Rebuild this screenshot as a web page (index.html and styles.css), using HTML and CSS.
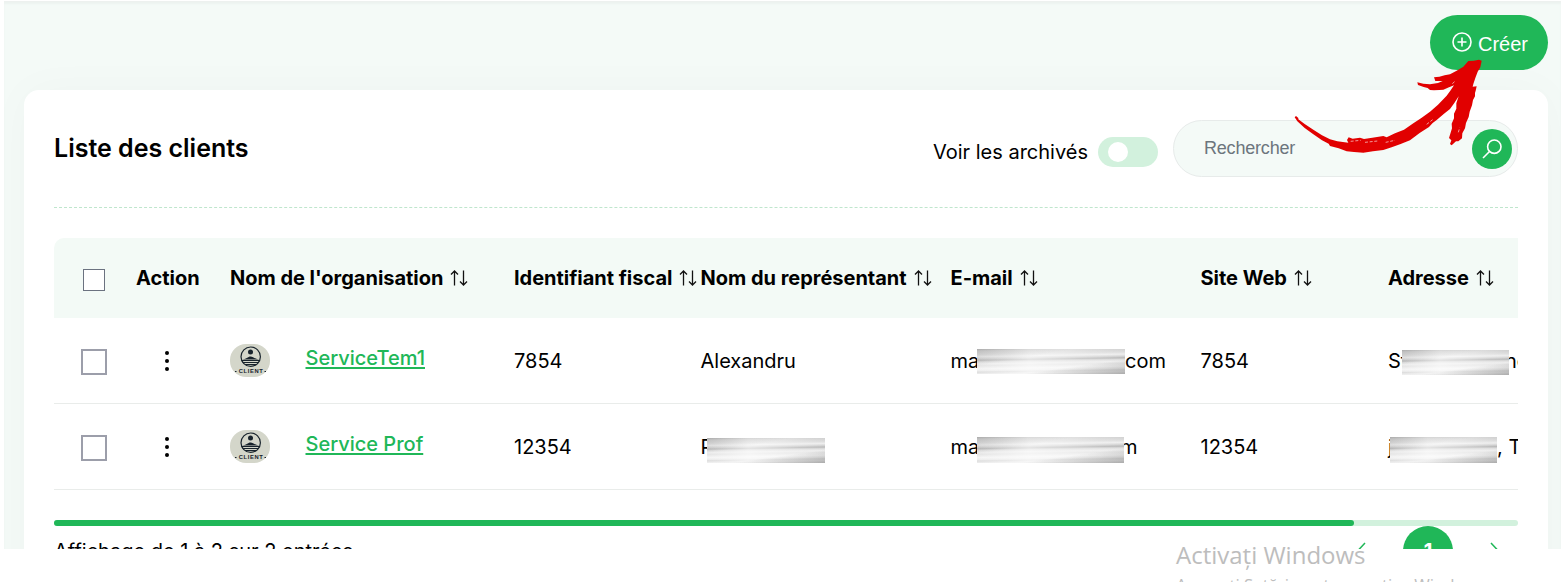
FILE: index.html
```html
<!DOCTYPE html>
<html lang="fr">
<head>
<meta charset="utf-8">
<title>Liste des clients</title>
<link rel="stylesheet" href="styles.css">
</head>
<body>
<svg class="defs" width="0" height="0" aria-hidden="true">
  <symbol id="sort" viewBox="0 0 20 18"><path d="M5.500 16.500V2M2 5.500l3.500-3.500 3.500 3.500M14.500 1.500v14.500M11 12.500l3.500 3.500 3.500-3.500" fill="none" stroke="#111" stroke-width="1.300"/></symbol>
  <symbol id="logo" viewBox="0 0 40 33">
    <rect width="40" height="33" rx="16" fill="#d4d6ca"/>
    <circle cx="20.700" cy="12.700" r="9.700" fill="none" stroke="#18232c" stroke-width="1.200"/>
    <circle cx="20.500" cy="8" r="2.500" fill="#18232c"/>
    <path d="M12 15.500c4-.2 6-3 8.500-3s4.500 2.800 9 3z" fill="#18232c"/>
    <path d="M11.500 16.500h18.500M12.500 18.500h16.500M15 20.500h11.500" stroke="#18232c" stroke-width="1"/>
    <text x="20.800" y="29.300" text-anchor="middle" textLength="24" class="logo-text">CLIENT</text>
    <path d="M5 27.500h1.500M34.500 27.500h1.500" stroke="#18232c"/>
  </symbol>
</svg>
<div class="app">
  <div class="toolbar">
    <button class="create"><svg width="20" height="20" viewBox="0 0 20 20" fill="none" stroke="#fff" stroke-width="1.600"><circle cx="10" cy="10" r="9"/><path d="M10 5.500v9M5.500 10h9"/></svg>Créer</button>
  </div>
  <main class="card">
    <header class="head">
      <h1>Liste des clients</h1>
      <div class="filters">
        <span class="archived">Voir les archivés</span>
        <span class="toggle"></span>
        <div class="search"><span>Rechercher</span><span class="search-btn"><svg width="20" height="20" viewBox="0 0 20 20" fill="none" stroke="#fff" stroke-width="1.600"><circle cx="12.300" cy="7.700" r="6.700"/><path d="M7.500 12.500L1 19"/></svg></span></div>
      </div>
    </header>
    <div class="table">
      <div class="row thead">
        <span class="pick"><i class="box small"></i></span><span>Action</span>
        <span>Nom de l'organisation<svg class="sort"><use href="#sort"/></svg></span>
        <span>Identifiant fiscal<svg class="sort"><use href="#sort"/></svg></span>
        <span>Nom du représentant<svg class="sort"><use href="#sort"/></svg></span>
        <span>E-mail<svg class="sort"><use href="#sort"/></svg></span>
        <span>Site Web<svg class="sort"><use href="#sort"/></svg></span>
        <span>Adresse<svg class="sort"><use href="#sort"/></svg></span>
      </div>
      <div class="row">
        <span class="pick"><i class="box"></i></span>
        <span class="more"><i></i><i></i><i></i></span>
        <span class="org"><svg class="logo"><use href="#logo"/></svg><a>ServiceTem1</a></span>
        <span>7854</span><span>Alexandru</span>
        <span><b class="lead mail">ma</b><i class="smear mail"></i>com</span>
        <span>7854</span>
        <span><b class="lead addr">St</b><i class="smear addr"></i><b class="tail">ne</b></span>
      </div>
      <div class="row">
        <span class="pick"><i class="box"></i></span>
        <span class="more"><i></i><i></i><i></i></span>
        <span class="org"><svg class="logo"><use href="#logo"/></svg><a>Service Prof</a></span>
        <span>12354</span>
        <span><b class="lead rep">P</b><i class="smear rep"></i></span>
        <span><b class="lead mail">ma</b><i class="smear mail short"></i><b class="tail">m</b></span>
        <span>12354</span>
        <span><b class="lead j">j</b><i class="smear addr second"></i>, T</span>
      </div>
    </div>
    <div class="scroll"><div class="thumb"></div></div>
    <footer class="foot">
      <span class="count">Affichage de 1 à 2 sur 2 entrées</span>
      <nav class="pager">
        <svg width="12" height="18" viewBox="0 0 12 18"><path d="M10 1L3 8.500l7 8" fill="none" stroke="#20b758" stroke-width="1.500"/></svg>
        <span class="page">1</span>
        <svg width="12" height="18" viewBox="0 0 12 18"><path d="M3 1l7 7.500-7 8" fill="none" stroke="#20b758" stroke-width="1.500"/></svg>
      </nav>
    </footer>
  </main>
</div>
<div class="watermark"><div>Activați Windows</div><p>Accesați Setări pentru a activa Windows.</p></div>
<svg class="pointer" viewBox="0 0 600 300" width="200" height="100">
  <path fill="#e10000" d="M2 1L6-3 13 3 13 7 32 21 58 38 84 55 108 67 130 73 163 77 159 69 164 61 176 65 198 62 210 66 235 62 268 57 278 61 303 49 330 38 358 19 382 3 408-16 432-37 458-64 470-80 480-95 465-89 448-82 436-81 420-80 408-81 401-87 389-90 372-96 370-104 388-100 408-98 432-102 446-108 424-108 420-119 436-121 452-125 468-128 488-139 508-151 523-168 539-169 555-172 563-169 559-149 551-136 544-117 538-99 536-91 548-92 545-79 543-72 543-62 537-51 534-35 527-16 524 0 516 18 513 34 505 49 504 64 493 73 486 73 473 85 468 81 472 70 465 63 474 34 473 20 480 4 480-10 487-25 487-41 494-62 481-42 468-24 450-10 428 9 416 18 405 30 378 47 365 57 348 70 318 82 293 91 268 99 237 103 208 107 180 105 158 103 134 94 108 87 104 80 84 70 58 52 32 33 10 13Z"/>
  <path stroke="#fff" stroke-width="1.800" fill="none" stroke-dasharray="9 5" d="M170 73l30-3M213 76l38-4M275 76l28-6M398 22l18-14M425-105l12-2M475-100l9-8M493 46l4-14"/>
</svg>
</body>
</html>
```
FILE: styles.css
```css
* { box-sizing: border-box; }
body { margin: 0; width: 1561px; height: 582px; overflow: hidden; background: #fff; color: #000; font-family: Inter, sans-serif; font-size: 20px; position: relative; padding: 2px 0 0 4px; }
.defs { position: absolute; }
.app { height: 547px; overflow: hidden; background: #f4faf7; padding: 13px 13px 0 20px; box-shadow: 0 -1px 0 #edf1ef, inset 0 2px 2px #edf3f0; }
.toolbar { display: flex; justify-content: flex-end; height: 75px; }
.create { width: 118px; height: 55px; border: 0; border-radius: 28px; background: #20b758; color: #fff; font: 20px "Liberation Sans", sans-serif; display: flex; align-items: center; justify-content: center; gap: 6px; padding: 4px 0 0 2px; }
.create svg { margin-top: -5px; }
.card { height: 600px; background: #fff; border-radius: 15px; padding: 30px; box-shadow: 0 0 45px rgba(0, 0, 0, .028); }
.head { height: 88px; border-bottom: 1px dashed #bfe6cd; display: flex; justify-content: space-between; }
h1 { margin: 12px 0 0; font-size: 25px; line-height: 32px; font-weight: 600; white-space: nowrap; }
.filters { display: flex; align-items: flex-start; }
.archived { margin: 20px 10px 0 0; line-height: 24px; }
.toggle { width: 60px; height: 30px; border-radius: 15px; background: #d2f1dd; margin: 17px 15px 0 0; padding: 5px 10px; }
.toggle::before { content: ""; display: block; width: 20px; height: 20px; border-radius: 50%; background: #fff; }
.search { width: 345px; height: 57px; border: 1px solid #e7ebea; border-radius: 29px; background: #f4faf7; display: flex; justify-content: space-between; align-items: center; padding: 0 5px 0 30px; color: #6c757d; font: 18px "Liberation Sans", sans-serif; letter-spacing: -.2px; }
.search-btn { width: 40px; height: 40px; border-radius: 50%; background: #20b758; display: flex; align-items: center; justify-content: center; }
.table { margin-top: 30px; overflow: hidden; border-radius: 10px 0 0 0; }
.row { display: grid; grid-template-columns: 82px 94px 284px 186.500px 250px 250px 187.500px 200px; height: 86px; border-bottom: 1px solid #e9ecea; white-space: nowrap; }
.row > span { display: flex; align-items: center; }
.thead { height: 80px; background: #f3faf6; border: 0; font-weight: 700; letter-spacing: -.02px; }
.sort { width: 20px; height: 18px; flex: none; margin-left: 6px; }
.row .pick { padding: 2px 0 0 27px; }
.thead .pick { padding: 4px 0 0 29px; }
.box { width: 26px; height: 26px; border: 2px solid #9c9eaa; background: #fff; }
.box.small { width: 22px; height: 22px; border: 1px solid #6b7280; }
.row .more { flex-direction: column; justify-content: center; gap: 4px; padding-right: 32px; }
.more i { width: 4px; height: 4px; border-radius: 50%; background: #000; }
.logo { width: 40px; height: 33px; margin-right: 35.500px; }
.logo-text { font: 700 5.800px "Liberation Sans", sans-serif; fill: #18232c; }
.org a { color: #20b758; font-weight: 500; text-decoration: underline; text-decoration-thickness: 2px; text-underline-offset: 2px; margin-top: -6px; }
.row b { font-weight: 400; }
.lead { overflow: hidden; flex: none; }
.lead.mail { width: 26.500px; }
.lead.addr { width: 14px; }
.lead.rep { width: 6.500px; }
.lead.j { width: 2px; overflow: visible; }
.smear { flex: none; position: relative; height: 25px; margin-top: 2px; background: linear-gradient(172deg, #9990 68%, #8889 100%), linear-gradient(170deg, #aaa7 0%, #bbb0 34%), linear-gradient(90deg, #fff0 0%, #fff9 35%, #fff5 65%, #fff0 100%), linear-gradient(179deg, #aaa 0, #d0d0d0 7%, #ddd 20%, #eee 28%, #d5d5d5 35%, #b8b8b8 41%, #ddd 47%, #ededed 54%, #e5e5e5 61%, #f5f5f5 72%, #eee 79%, #ddd 84%, #eee 91%, #e0e0e0 100%); }
.smear.mail { width: 148px; }
.smear.short { width: 147px; height: 26px; margin-top: 6px; }
.smear.addr { width: 107px; margin-top: 3px; }
.smear.second { height: 26px; margin-top: 6px; }
.smear.rep { width: 118px; margin-top: 7px; }
.tail { margin-left: -4px; position: relative; clip-path: inset(0 0 0 4px); }
.scroll { height: 6px; margin-top: 30px; border-radius: 3px; background: #d2f1dd; }
.thumb { width: 1300px; height: 6px; border-radius: 3px; background: #20b758; }
.foot { display: flex; justify-content: space-between; }
.count { margin-top: 12px; line-height: 26px; }
.pager { display: flex; align-items: flex-start; padding-right: 18px; }
.pager svg { margin-top: 16px; }
.page { width: 50px; height: 50px; border-radius: 50%; background: #20b758; color: #fff; text-align: center; font-weight: 700; line-height: 50px; margin: 0 35px 0 36px; }
.watermark { position: absolute; left: 1176px; top: 539px; color: #bdbdbd; font: 24px/31px "Open Sans", sans-serif; white-space: nowrap; }
.watermark p { margin: 3px 0 0; font-size: 16.800px; line-height: 24px; }
.pointer { position: absolute; left: 1294px; top: 117px; overflow: visible; }
```
